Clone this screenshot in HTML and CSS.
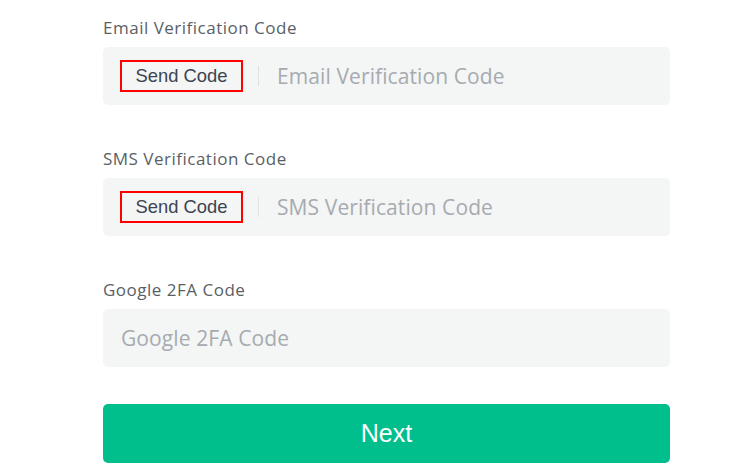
FILE: index.html
```html
<!DOCTYPE html>
<html>
<head>
<meta charset="utf-8">
<link rel="stylesheet" href="styles.css">
</head>
<body>
<form class="form">
  <div class="field">
    <label class="label">Email Verification Code</label>
    <div class="input-box">
      <span class="send">Send Code</span>
      <span class="sep"></span>
      <span class="placeholder">Email Verification Code</span>
    </div>
  </div>
  <div class="field">
    <label class="label">SMS Verification Code</label>
    <div class="input-box">
      <span class="send">Send Code</span>
      <span class="sep"></span>
      <span class="placeholder">SMS Verification Code</span>
    </div>
  </div>
  <div class="field">
    <label class="label">Google 2FA Code</label>
    <div class="input-box plain">
      <span class="placeholder">Google 2FA Code</span>
    </div>
  </div>
  <button type="button" class="next">Next</button>
</form>
</body>
</html>
```
FILE: styles.css
```css
html, body {
  margin: 0;
  padding: 0;
  background: #ffffff;
}
body {
  font-family: "Open Sans", "Noto Sans", sans-serif;
}
.form {
  width: 567px;
  margin-left: 103px;
  padding-top: 18px;
  display: flex;
  flex-direction: column;
}
.field {
  display: flex;
  flex-direction: column;
}
.field + .field {
  margin-top: 44px;
}
.label {
  font-size: 17px;
  letter-spacing: 0.5px;
  line-height: 20px;
  color: #5a5f66;
  margin-bottom: 9px;
}
.input-box {
  height: 58px;
  background: #f4f5f5;
  border-radius: 5px;
  display: flex;
  align-items: center;
  padding-left: 17px;
}
.input-box.plain {
  padding-left: 18px;
}
.send {
  box-sizing: border-box;
  width: 123px;
  height: 32px;
  border: 2px solid #ff0000;
  display: flex;
  align-items: center;
  justify-content: center;
  font-family: "Liberation Sans", Arial, sans-serif;
  font-size: 18.4px;
  color: #3c4450;
}
.sep {
  width: 1px;
  height: 20px;
  background: #dfe1e3;
  margin-left: 15px;
  margin-right: 18px;
}
.placeholder {
  font-size: 21px;
  letter-spacing: 0.1px;
  color: #a6abb0;
}
.next {
  margin-top: 37px;
  height: 59px;
  border: none;
  border-radius: 5px;
  background: #00bf8c;
  color: #ffffff;
  font-family: "Liberation Sans", Arial, sans-serif;
  font-size: 25px;
  padding: 0;
}
```
